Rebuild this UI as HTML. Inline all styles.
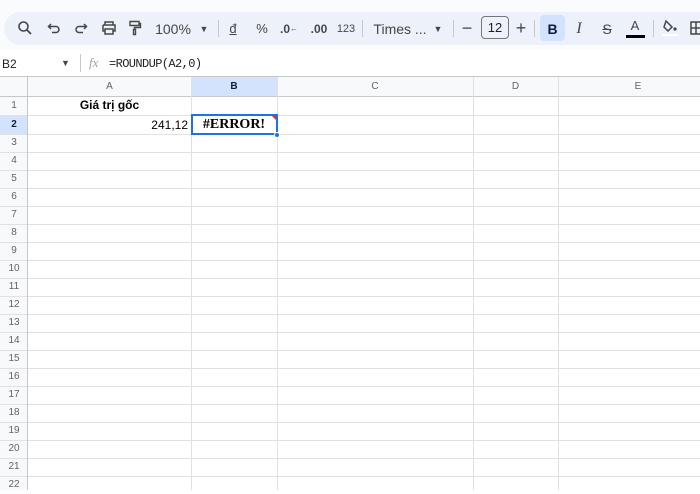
<!DOCTYPE html>
<html><head><meta charset="utf-8"><style>
*{margin:0;padding:0;box-sizing:border-box}
body{width:700px;height:490px;overflow:hidden;background:#fff;font-family:"Liberation Sans",Arial,sans-serif;position:relative}
.a{position:absolute;white-space:nowrap}
.tb{left:4px;top:12px;width:720px;height:33px;background:#edf2fa;border-radius:17px}
.ic{position:absolute;top:12px;height:33px;display:flex;align-items:center;justify-content:center;color:#444746;font-size:14px;white-space:nowrap}
.sep{position:absolute;top:20px;width:1px;height:17px;background:#c7c7c7}
.hl{position:absolute;height:1px;background:#e1e1e1;left:0;width:700px}
.vl{position:absolute;width:1px;background:#e1e1e1;top:77px;height:413px}
.rn{position:absolute;left:0;width:28px;text-align:center;font-size:10px;color:#5f6368;line-height:18px}
.ch{position:absolute;top:77px;height:19px;line-height:19px;text-align:center;font-size:10px;color:#5f6368}
</style></head><body>
<div class="a" style="left:0;top:0;width:700px;height:50px;background:#f9fbfd"></div>
<div class="a tb"></div>
<svg class="a" style="left:17px;top:20px" width="16" height="16" viewBox="0 0 16 16"><circle cx="6.5" cy="6.5" r="4.5" fill="none" stroke="#444746" stroke-width="1.6"/><path d="M10 10l4 4" stroke="#444746" stroke-width="1.8"/></svg>
<svg class="a" style="left:47px;top:21px" width="14" height="14" viewBox="0 0 14 14"><path d="M4 3L1.5 5.5 4 8M1.5 5.5H9a3 3 0 0 1 0 6H5" fill="none" stroke="#444746" stroke-width="1.5"/></svg>
<svg class="a" style="left:74px;top:21px" width="14" height="14" viewBox="0 0 14 14"><path d="M10 3l2.5 2.5L10 8M12.5 5.5H5a3 3 0 0 0 0 6h4" fill="none" stroke="#444746" stroke-width="1.5"/></svg>
<svg class="a" style="left:101px;top:20px" width="16" height="16" viewBox="0 0 16 16"><path d="M4 5V2h8v3M2 5h12v6h-2M4 11H2V5M4 9h8v5H4z" fill="none" stroke="#444746" stroke-width="1.5"/></svg>
<svg class="a" style="left:128px;top:20px" width="14" height="16" viewBox="0 0 14 16"><path d="M2 1.5h9v4H2zM11 3.5h1.5v4H6.5v2M5.5 9.5h2v5h-2z" fill="none" stroke="#444746" stroke-width="1.4"/></svg>
<div class="ic" style="left:155px;width:36px;font-size:14px">100%</div>
<div class="ic" style="left:198px;width:12px;font-size:9px">▼</div>
<div class="sep" style="left:218px"></div>
<div class="ic" style="left:226px;width:14px;font-size:13px;text-decoration:underline">đ</div>
<div class="ic" style="left:255px;width:14px;font-size:13px">%</div>
<div class="ic" style="left:280px;width:18px;font-size:12px;font-weight:bold">.0<span style="font-size:8px">←</span></div>
<div class="ic" style="left:308px;width:22px;font-size:12px;font-weight:bold">.00</div>
<div class="ic" style="left:335px;width:22px;font-size:11px">123</div>
<div class="sep" style="left:362px"></div>
<div class="ic" style="left:374px;width:52px;font-size:14px">Times ...</div>
<div class="ic" style="left:432px;width:12px;font-size:9px">▼</div>
<div class="sep" style="left:453px"></div>
<div class="ic" style="left:460px;width:14px;font-size:18px">−</div>
<div class="a" style="left:481px;top:16px;width:28px;height:23px;border:1px solid #747775;border-radius:4px;font-size:13px;text-align:center;line-height:21px;color:#1f1f1f">12</div>
<div class="ic" style="left:514px;width:14px;font-size:18px">+</div>
<div class="sep" style="left:534px"></div>
<div class="a" style="left:540px;top:15px;width:25px;height:26px;background:#d3e3fd;border-radius:4px"></div>
<div class="ic" style="left:540px;width:25px;font-weight:bold;font-size:14px;color:#0b1f3f">B</div>
<div class="ic" style="left:572px;width:14px;font-family:'Liberation Serif',serif;font-style:italic;font-size:16px">I</div>
<div class="ic" style="left:599px;width:16px;font-size:14px;text-decoration:line-through">S</div>
<div class="ic" style="left:627px;width:16px;font-size:13px;top:9px">A</div>
<div class="a" style="left:626px;top:35px;width:19px;height:3px;background:#000"></div>
<div class="sep" style="left:653px"></div>
<svg class="a" style="left:661px;top:18px" width="18" height="18" viewBox="0 0 18 18"><path d="M5 3l6 6-4 4-4-4z" fill="none" stroke="#444746" stroke-width="1.5"/><circle cx="14" cy="11" r="1.6" fill="#444746"/><rect x="1" y="16" width="16" height="2" fill="#fff"/></svg>
<svg class="a" style="left:690px;top:21px" width="12" height="14" viewBox="0 0 12 14"><path d="M1 1h10v12H1zM1 7h10M6 1v12" fill="none" stroke="#444746" stroke-width="1.5"/></svg>

<div class="a" style="left:0;top:50px;width:700px;height:27px;background:#fff"></div>
<div class="a" style="left:2px;top:57px;font-size:12px;color:#1f1f1f">B2</div>
<div class="a" style="left:61px;top:58px;font-size:9px;color:#444746">▼</div>
<div class="a" style="left:80px;top:54px;width:1px;height:18px;background:#c7c7c7"></div>
<div class="a" style="left:89px;top:55px;font-size:13px;font-style:italic;font-family:'Liberation Serif',serif;color:#9aa0a6">fx</div>
<div class="a" style="left:109px;top:57px;font-size:12px;font-family:'Liberation Mono',monospace;color:#1f1f1f;letter-spacing:-0.6px">=ROUNDUP(A2,0)</div>

<div class="a" style="left:0;top:77px;width:700px;height:19px;background:#f8f9fa"></div>
<div class="a" style="left:0;top:77px;width:28px;height:413px;background:#f8f9fa"></div>
<div class="a" style="left:191px;top:77px;width:86px;height:19px;background:#d3e3fd"></div>
<div class="a" style="left:0;top:115px;width:28px;height:19px;background:#d3e3fd"></div>
<div class="hl" style="top:76px;background:#c7c7c7"></div>
<div class="hl" style="top:96px;background:#c7c7c7"></div>
<div class="hl" style="top:115px"></div>
<div class="hl" style="top:134px"></div>
<div class="hl" style="top:152px"></div><div class="hl" style="top:170px"></div><div class="hl" style="top:188px"></div><div class="hl" style="top:206px"></div><div class="hl" style="top:224px"></div><div class="hl" style="top:242px"></div><div class="hl" style="top:260px"></div><div class="hl" style="top:278px"></div><div class="hl" style="top:296px"></div><div class="hl" style="top:314px"></div><div class="hl" style="top:332px"></div><div class="hl" style="top:350px"></div><div class="hl" style="top:368px"></div><div class="hl" style="top:386px"></div><div class="hl" style="top:404px"></div><div class="hl" style="top:422px"></div><div class="hl" style="top:440px"></div><div class="hl" style="top:458px"></div><div class="hl" style="top:476px"></div>
<div class="vl" style="left:27px;background:#c7c7c7"></div>
<div class="vl" style="left:191px"></div>
<div class="vl" style="left:277px"></div>
<div class="vl" style="left:473px"></div>
<div class="vl" style="left:558px"></div>
<div class="ch" style="left:28px;width:163px">A</div>
<div class="ch" style="left:191px;width:86px;color:#0b1f3f;font-weight:bold">B</div>
<div class="ch" style="left:277px;width:196px">C</div>
<div class="ch" style="left:473px;width:85px">D</div>
<div class="ch" style="left:558px;width:160px">E</div>
<div class="rn" style="top:96px;line-height:19px">1</div>
<div class="rn" style="top:115px;line-height:19px;font-weight:bold;color:#0b1f3f">2</div>
<div class="rn" style="top:134px">3</div><div class="rn" style="top:152px">4</div><div class="rn" style="top:170px">5</div><div class="rn" style="top:188px">6</div><div class="rn" style="top:206px">7</div><div class="rn" style="top:224px">8</div><div class="rn" style="top:242px">9</div><div class="rn" style="top:260px">10</div><div class="rn" style="top:278px">11</div><div class="rn" style="top:296px">12</div><div class="rn" style="top:314px">13</div><div class="rn" style="top:332px">14</div><div class="rn" style="top:350px">15</div><div class="rn" style="top:368px">16</div><div class="rn" style="top:386px">17</div><div class="rn" style="top:404px">18</div><div class="rn" style="top:422px">19</div><div class="rn" style="top:440px">20</div><div class="rn" style="top:458px">21</div><div class="rn" style="top:476px">22</div>
<div class="a" style="left:28px;top:96px;width:163px;height:19px;line-height:19px;text-align:center;font-size:12px;font-weight:bold;color:#000">Giá trị gốc</div>
<div class="a" style="left:28px;top:115px;width:160px;height:19px;line-height:20px;text-align:right;font-size:12px;color:#000">241,12</div>
<div class="a" style="left:191px;top:115px;width:86px;height:20px;line-height:19px;text-align:center;font-size:14px;font-weight:bold;font-family:'Liberation Serif',serif;color:#000">#ERROR!</div>
<div class="a" style="left:191px;top:114px;width:87px;height:21px;border:2px solid #1a73e8"></div>
<div class="a" style="left:272px;top:116px;width:0;height:0;border-left:4px solid transparent;border-top:4px solid #d93025"></div>
<div class="a" style="left:274px;top:132px;width:6px;height:6px;border-radius:50%;background:#1a73e8;border:1px solid #fff"></div>
</body></html>
